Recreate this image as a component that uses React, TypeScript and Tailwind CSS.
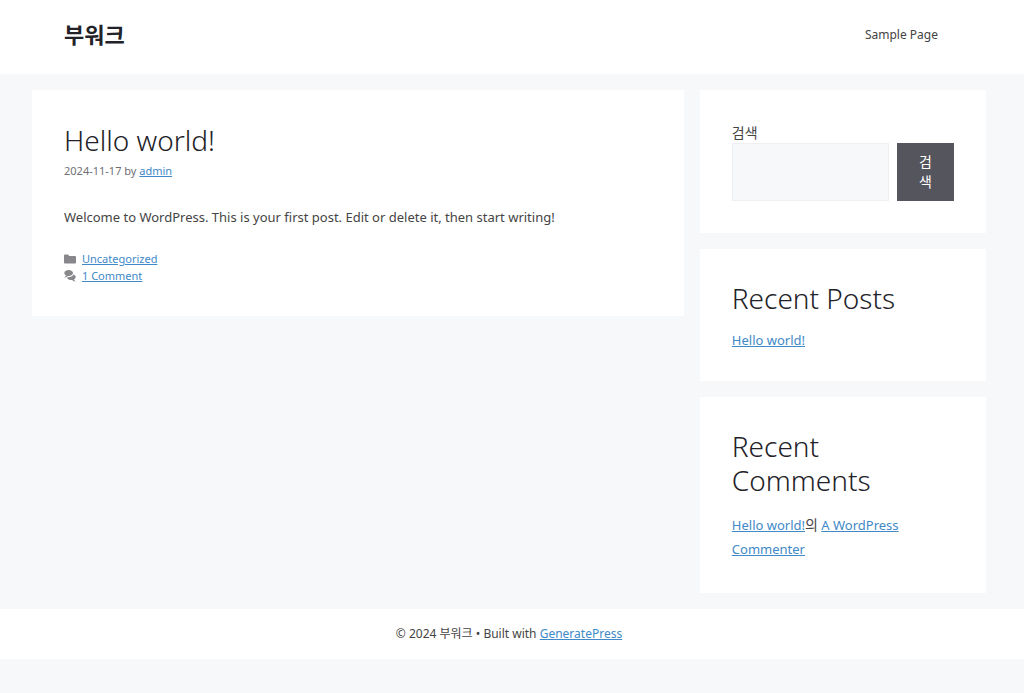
import type { ReactNode } from 'react';

const linkClass = 'text-[#4189c7] underline hover:text-black';

function Widget({ title, children }: { title?: string; children: ReactNode }) {
  return (
    <section className="bg-white p-8">
      {title && (
        <h2 className="mb-4 text-[28px] leading-[34px] font-light text-[#222228]">
          {title}
        </h2>
      )}
      {children}
    </section>
  );
}

function FolderIcon() {
  return (
    <svg viewBox="0 0 512 512" className="size-3 shrink-0 fill-[#88888c]" aria-hidden="true">
      <path d="M0 112c0-26.51 21.49-48 48-48h110.014a48 48 0 0 1 43.592 27.907l12.349 26.791A16 16 0 0 0 228.486 128H464c26.51 0 48 21.49 48 48v224c0 26.51-21.49 48-48 48H48c-26.51 0-48-21.49-48-48V112z" />
    </svg>
  );
}

function CommentsIcon() {
  return (
    <svg viewBox="0 0 512 512" className="size-3 shrink-0 fill-[#88888c]" aria-hidden="true">
      <path d="M132.838 329.973a435.298 435.298 0 0 0 16.769-9.004c13.363-7.574 26.587-16.142 37.419-25.507 7.544.597 15.27.925 23.098.925 54.905 0 105.634-15.311 143.285-41.28 23.728-16.365 43.115-37.692 54.155-62.645 54.739 22.205 91.498 63.272 91.498 110.286 0 42.186-29.558 79.498-75.09 102.828 23.46 49.216 75.09 101.709 75.09 101.709s-115.837-38.35-154.424-78.46c-9.956 1.12-20.297 1.758-30.793 1.758-88.727 0-162.927-43.071-181.007-100.61z" />
      <path d="M383.371 132.502c0 70.603-82.961 127.787-185.216 127.787-10.496 0-20.837-.639-30.793-1.757-38.587 40.093-154.424 78.429-154.424 78.429s51.63-52.472 75.09-101.67c-45.532-23.321-75.09-60.619-75.09-102.79C12.938 61.9 95.9 4.716 198.155 4.716 300.41 4.715 383.37 61.9 383.37 132.502z" />
    </svg>
  );
}

export default function App() {
  return (
    <div className="min-h-screen bg-[#f7f8f9] font-['Noto_Sans','Noto_Sans_CJK_KR',sans-serif] text-sm text-[#444]">
      <header className="bg-white">
        <div className="ml-8 mr-[38px] flex items-center justify-between pt-[18px] pr-12 pb-6 pl-8">
          <a href="#" className="text-[22px] leading-8 font-bold text-[#222228]">
            부워크
          </a>
          <nav>
            <a href="#sample-page" className="text-xs">
              Sample Page
            </a>
          </nav>
        </div>
      </header>

      <div className="ml-8 mr-[38px] flex items-start gap-4 py-4">
        <main className="min-w-0 flex-1 bg-white p-8">
          <article>
            <h1 className="text-[28px] leading-9 font-light text-[#222228]">Hello world!</h1>
            <div className="mt-1 text-[11px] leading-[18px] text-[#707074]">
              <time dateTime="2024-11-17">2024-11-17</time> by{' '}
              <a href="#admin" className={linkClass}>
                admin
              </a>
            </div>
            <p className="mt-6 text-[13px] leading-[26px]">
              Welcome to WordPress. This is your first post. Edit or delete it, then start writing!
            </p>
            <footer className="mt-5 text-[11px] leading-[17px]">
              <div className="flex items-center gap-[6px]">
                <FolderIcon />
                <a href="#uncategorized" className={linkClass}>
                  Uncategorized
                </a>
              </div>
              <div className="flex items-center gap-[6px]">
                <CommentsIcon />
                <a href="#comments" className={linkClass}>
                  1 Comment
                </a>
              </div>
            </footer>
          </article>
        </main>

        <aside className="flex w-[30%] flex-col gap-4">
          <Widget>
            <form role="search" onSubmit={(e) => e.preventDefault()}>
              <label htmlFor="search" className="block leading-[21px]">
                검색
              </label>
              <div className="flex gap-2">
                <input
                  id="search"
                  type="search"
                  className="min-w-0 flex-1 border border-[#eeeff0] bg-[#f7f8f9] px-3"
                />
                <button
                  type="submit"
                  className="w-[57px] bg-[#55555e] px-5 py-[9px] leading-5 text-white"
                >
                  검색
                </button>
              </div>
            </form>
          </Widget>
          <Widget title="Recent Posts">
            <ul>
              <li className="text-[13px] leading-[18px]">
                <a href="#hello-world" className={linkClass}>
                  Hello world!
                </a>
              </li>
            </ul>
          </Widget>
          <Widget title="Recent Comments">
            <ul>
              <li className="text-[13px] leading-6">
                <a href="#comment-1" className={linkClass}>
                  Hello world!
                </a>
                <span className="text-sm leading-5">의</span>{' '}
                <a href="#commenter" className={linkClass}>
                  A WordPress Commenter
                </a>
              </li>
            </ul>
          </Widget>
        </aside>
      </div>

      <footer className="bg-white">
        <div className="ml-8 mr-[38px] py-4 text-center text-xs leading-[18px]">
          © 2024 부워크 • Built with{' '}
          <a href="#generatepress" className={linkClass}>
            GeneratePress
          </a>
        </div>
      </footer>
    </div>
  );
}
